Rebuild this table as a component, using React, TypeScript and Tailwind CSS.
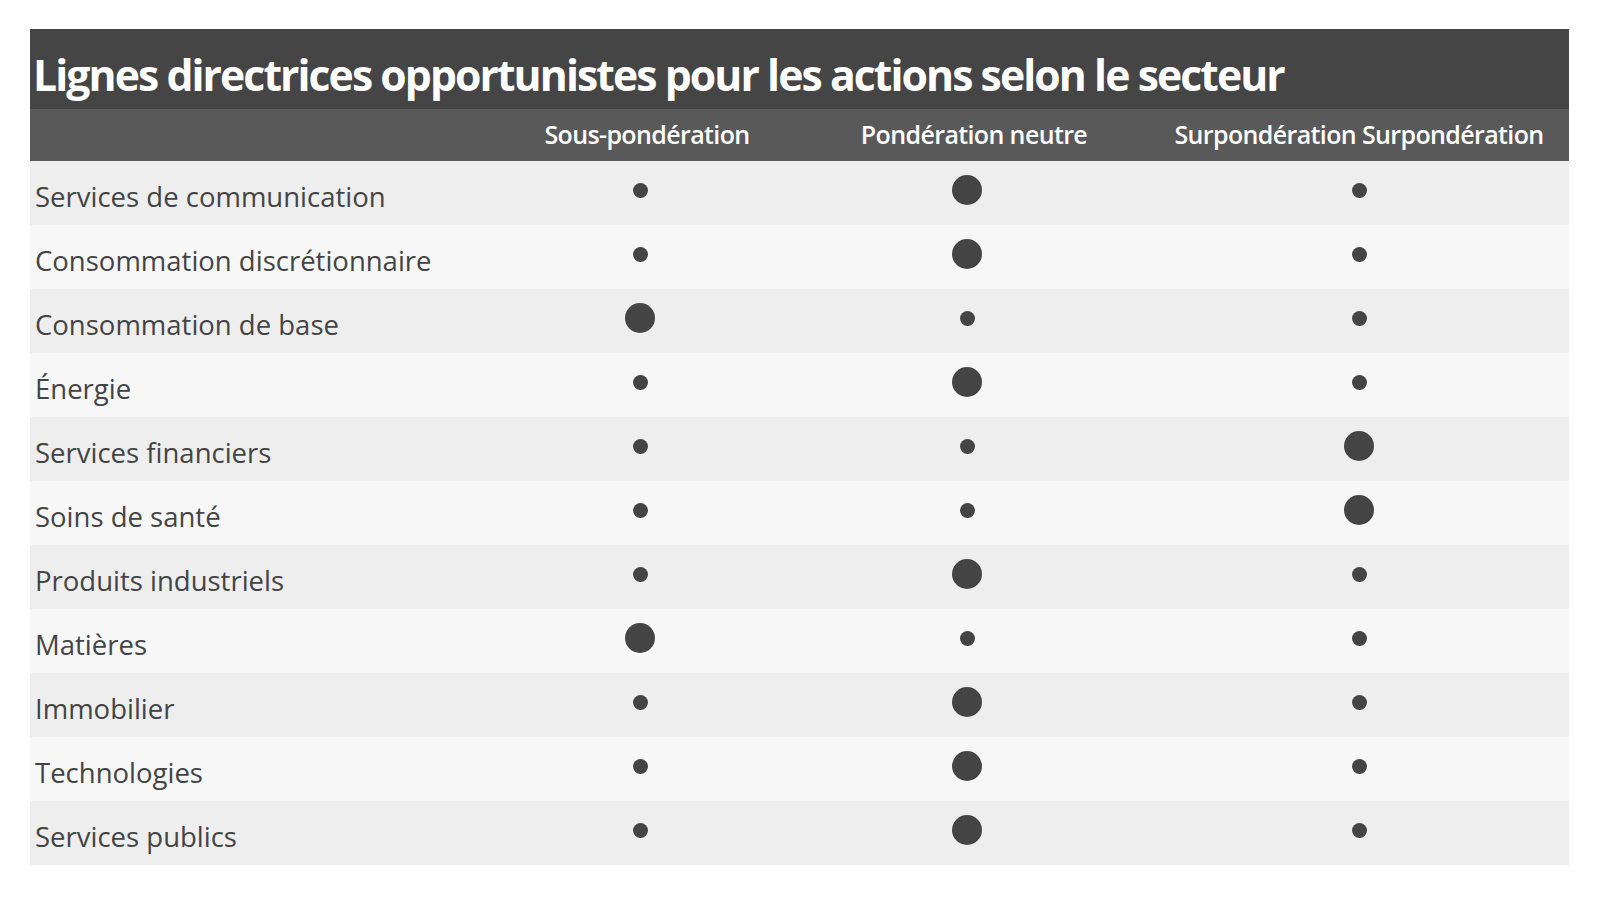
const rows: { name: string; sizes: [number, number, number] }[] = [
  { name: "Services de communication", sizes: [0, 1, 0] },
  { name: "Consommation discrétionnaire", sizes: [0, 1, 0] },
  { name: "Consommation de base", sizes: [1, 0, 0] },
  { name: "Énergie", sizes: [0, 1, 0] },
  { name: "Services financiers", sizes: [0, 0, 1] },
  { name: "Soins de santé", sizes: [0, 0, 1] },
  { name: "Produits industriels", sizes: [0, 1, 0] },
  { name: "Matières", sizes: [1, 0, 0] },
  { name: "Immobilier", sizes: [0, 1, 0] },
  { name: "Technologies", sizes: [0, 1, 0] },
  { name: "Services publics", sizes: [0, 1, 0] },
];

function Dot({ big }: { big: boolean }) {
  return big ? (
    <span className="inline-block w-[30px] h-[30px] rounded-full bg-[#444444]" />
  ) : (
    <span className="inline-block w-[15px] h-[15px] rounded-full bg-[#444444]" />
  );
}

export default function App() {
  return (
    <div className="min-h-screen bg-white pt-[29px] pl-[30px] font-['Open_Sans',sans-serif]">
      <div className="w-[1539px]">
        {/* Titre */}
        <div className="h-[80px] bg-[#454545] flex items-end pl-[3px] pb-[12px]">
          <h1 className="text-white font-bold text-[42.7px] leading-none tracking-[-0.045em]">
            Lignes directrices opportunistes pour les actions selon le secteur
          </h1>
        </div>

        <table className="w-full table-fixed border-collapse">
          <colgroup>
            <col className="w-[465px]" />
            <col className="w-[290px]" />
            <col className="w-[364px]" />
            <col className="w-[420px]" />
          </colgroup>
          <thead>
            <tr className="h-[52px] bg-[#595959] text-white text-[25px] font-semibold tracking-[-0.025em]">
              <th />
              <th className="text-center font-semibold pl-[14px]">Sous-pondération</th>
              <th className="text-center font-semibold pl-[14px]">Pondération neutre</th>
              <th className="text-center font-semibold whitespace-nowrap">Surpondération Surpondération</th>
            </tr>
          </thead>
          <tbody>
            {rows.map((row, i) => (
              <tr
                key={row.name}
                className={i % 2 === 0 ? "h-[64px] bg-[#eeeeee]" : "h-[64px] bg-[#f7f7f7]"}
              >
                <td className="pl-[5px] pt-[8px] text-[27.5px] leading-none text-[#444444]">
                  {row.name}
                </td>
                {row.sizes.map((s, j) => (
                  <td key={j} className="text-center align-middle">
                    <div className="flex items-center justify-center h-[64px] pb-[6px]">
                      <Dot big={s === 1} />
                    </div>
                  </td>
                ))}
              </tr>
            ))}
          </tbody>
        </table>
      </div>
    </div>
  );
}
